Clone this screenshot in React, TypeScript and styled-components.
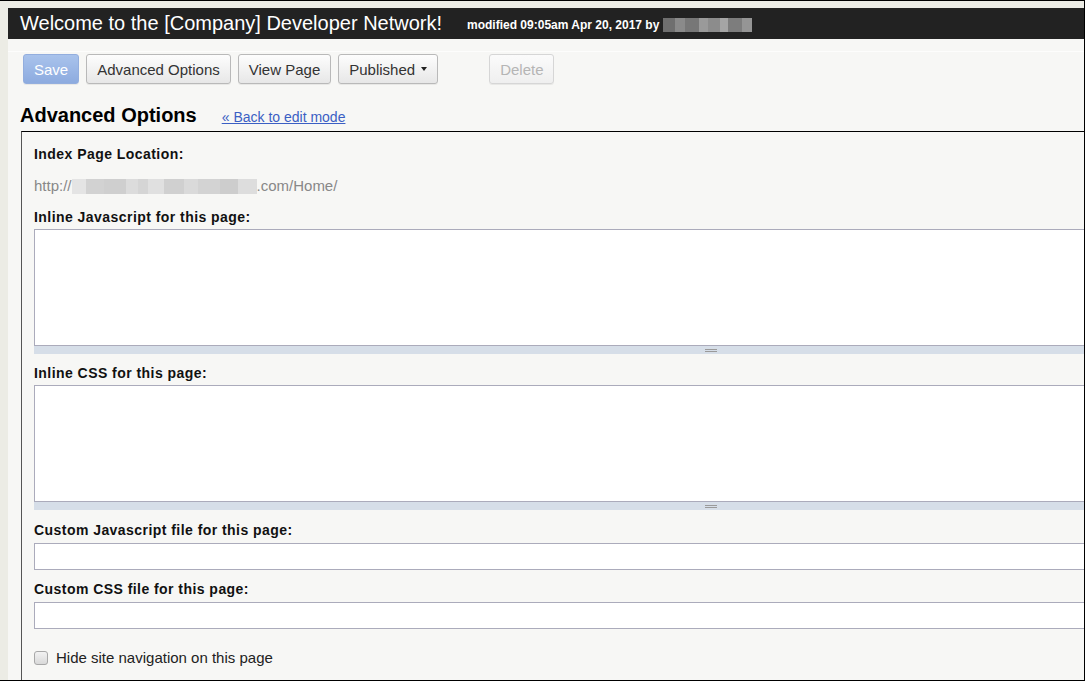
import styled, { createGlobalStyle } from 'styled-components';

/* —— tokens —— */
const font = '"Liberation Sans", Arial, sans-serif';
const pageBg = '#f7f7f5';
const txt = '#111';
const fieldBorder = '#ababbb';

const Global = createGlobalStyle`
  html, body { margin: 0; padding: 0; background: #efefe9; }
  body { font-family: ${font}; color: ${txt}; }
`;

/* —— screen frame —— */
const Frame = styled.div`
  width: 1085px;
  height: 681px;
  box-sizing: border-box;
  border: 1px solid #000;
  border-left: none;
  padding: 7px 0 0 8px;
  overflow: hidden;
  background: #ecece5;
  display: flex;
`;

const Page = styled.div`
  flex: 1;
  min-width: 0;
  background: ${pageBg};
  display: flex;
  flex-direction: column;
  overflow: hidden;
`;

/* —— title bar —— */
const TitleBar = styled.header`
  height: 31px;
  flex: none;
  background: #222;
  display: flex;
  align-items: center;
  padding-left: 12px;
  white-space: nowrap;
`;
const Title = styled.h1`
  margin: 0;
  font-size: 20px;
  font-weight: 400;
  color: #fff;
`;
const Modified = styled.span`
  margin-left: 25px;
  margin-top: 3px;
  font-size: 12px;
  font-weight: 700;
  color: #fff;
  display: flex;
  align-items: center;
`;

/* pixelated redaction */
const Mosaic = styled.span<{ $h: number }>`
  display: inline-flex;
  height: ${p => p.$h}px;
  vertical-align: middle;
`;
const Cell = styled.span<{ $w: number }>`
  width: ${p => p.$w}px;
  height: 100%;
`;

function Redact({ cells, h }: { cells: [number, string][]; h: number }) {
  return (
    <Mosaic $h={h}>
      {cells.map(([w, c], i) => (
        <Cell key={i} $w={w} style={{ background: c }} />
      ))}
    </Mosaic>
  );
}

/* —— toolbar —— */
const Toolbar = styled.div`
  display: flex;
  align-items: center;
  gap: 7px;
  margin-top: 12px;
  border-top: 1px solid #fdfdfc;
  padding: 2px 0 0 15px;
`;
const Btn = styled.button<{ $primary?: boolean; $gapLeft?: number }>`
  height: 30px;
  padding: 0 10px;
  font-family: ${font};
  font-size: 15px;
  border-radius: 3px;
  display: inline-flex;
  align-items: center;
  gap: 6px;
  margin-left: ${p => p.$gapLeft ?? 0}px;
  color: ${p => (p.$primary ? '#fff' : '#333')};
  border: 1px solid ${p => (p.$primary ? '#93aede' : '#b9b9b9')};
  background: ${p =>
    p.$primary
      ? 'linear-gradient(#a9c3ec, #8dabdf)'
      : 'linear-gradient(#fdfdfd, #e7e7e7)'};
  box-shadow: 0 1px 0 rgba(0,0,0,.06);

  &:disabled {
    color: #b5b5b5;
    border-color: #d6d6d6;
    background: linear-gradient(#fbfbfb, #efefef);
  }
`;
const Caret = styled.span`
  width: 0;
  height: 0;
  border-left: 3px solid transparent;
  border-right: 3px solid transparent;
  border-top: 4px solid #222;
`;

/* —— heading row —— */
const HeadRow = styled.div`
  display: flex;
  align-items: baseline;
  gap: 25px;
  padding: 19px 0 4px 12px;
`;
const Heading = styled.h2`
  margin: 0;
  font-size: 20px;
  line-height: 24px;
  font-weight: 700;
  color: #000;
`;
const BackLink = styled.a`
  font-size: 14px;
  color: #3b5fc4;
  text-decoration: underline;
  cursor: pointer;
`;

/* —— options box —— */
const Box = styled.section`
  flex: 1;
  margin-left: 13px;
  border-top: 1px solid #000;
  border-left: 1px solid #555;
  padding: 13px 0 0 12px;
  display: flex;
  flex-direction: column;
  overflow: hidden;
`;
const Label = styled.label<{ $top?: number }>`
  display: block;
  margin-top: ${p => p.$top ?? 0}px;
  font-size: 14px;
  line-height: 18px;
  font-weight: 700;
  letter-spacing: 0.45px;
  color: #111;
  white-space: nowrap;
`;
const Url = styled.div`
  margin-top: 14px;
  font-size: 15px;
  line-height: 18px;
  color: #888;
  display: flex;
  align-items: center;
`;
const AreaWrap = styled.div`
  margin-top: 3px;
  width: 1354px;
  flex: none;
`;
const Area = styled.textarea`
  display: block;
  width: 100%;
  height: 117px;
  box-sizing: border-box;
  border: 1px solid ${fieldBorder};
  background: #fff;
  resize: none;
  margin: 0;
`;
const Grip = styled.div`
  height: 8px;
  background: #d6dee8;
  display: flex;
  justify-content: center;
  align-items: center;
  &::after {
    content: '';
    width: 12px;
    height: 1px;
    border-top: 1px solid #9a9a9a;
    border-bottom: 1px solid #9a9a9a;
  }
`;
const TextInput = styled.input`
  display: block;
  flex: none;
  margin-top: 4px;
  width: 1354px;
  height: 27px;
  box-sizing: border-box;
  border: 1px solid ${fieldBorder};
  background: #fff;
`;
const CheckRow = styled.label`
  margin-top: 20px;
  display: flex;
  align-items: center;
  gap: 8px;
  font-size: 15px;
  line-height: 18px;
  color: #222;
`;
const Check = styled.span`
  width: 12px;
  height: 12px;
  border: 1px solid #a8a8a8;
  border-radius: 3px;
  background: linear-gradient(#f2f2f2, #d9d9d9);
`;

const headerBlur: [number, string][] = [
  [12, '#6f6f6f'], [10, '#8a8a8a'], [14, '#777'], [9, '#9a9a9a'],
  [12, '#8c8c8c'], [8, '#a5a5a5'], [14, '#7d7d7d'], [10, '#959595'],
];
const urlBlur: [number, string][] = [
  [14, '#e4e4e4'], [18, '#d2d2d2'], [22, '#cfcfcf'], [12, '#dcdcdc'],
  [10, '#d5d5d5'], [16, '#e0e0e0'], [20, '#d0d0d0'], [14, '#dadada'],
  [22, '#d3d3d3'], [18, '#cdcdcd'], [19, '#dddddd'],
];

export default function App() {
  return (
    <>
      <Global />
      <Frame>
        <Page>
          <TitleBar>
            <Title>Welcome to the [Company] Developer Network!</Title>
            <Modified>
              modified 09:05am Apr 20, 2017 by&nbsp;
              <Redact cells={headerBlur} h={14} />
            </Modified>
          </TitleBar>

          <Toolbar>
            <Btn $primary>Save</Btn>
            <Btn>Advanced Options</Btn>
            <Btn>View Page</Btn>
            <Btn>Published <Caret /></Btn>
            <Btn disabled $gapLeft={44}>Delete</Btn>
          </Toolbar>

          <HeadRow>
            <Heading>Advanced Options</Heading>
            <BackLink>« Back to edit mode</BackLink>
          </HeadRow>

          <Box>
            <Label>Index Page Location:</Label>
            <Url>
              http://
              <Redact cells={urlBlur} h={15} />
              .com/Home/
            </Url>

            <Label $top={13}>Inline Javascript for this page:</Label>
            <AreaWrap>
              <Area />
              <Grip />
            </AreaWrap>

            <Label $top={10}>Inline CSS for this page:</Label>
            <AreaWrap>
              <Area />
              <Grip />
            </AreaWrap>

            <Label $top={11}>Custom Javascript file for this page:</Label>
            <TextInput />

            <Label $top={10}>Custom CSS file for this page:</Label>
            <TextInput />

            <CheckRow>
              <Check />
              Hide site navigation on this page
            </CheckRow>
          </Box>
        </Page>
      </Frame>
    </>
  );
}
